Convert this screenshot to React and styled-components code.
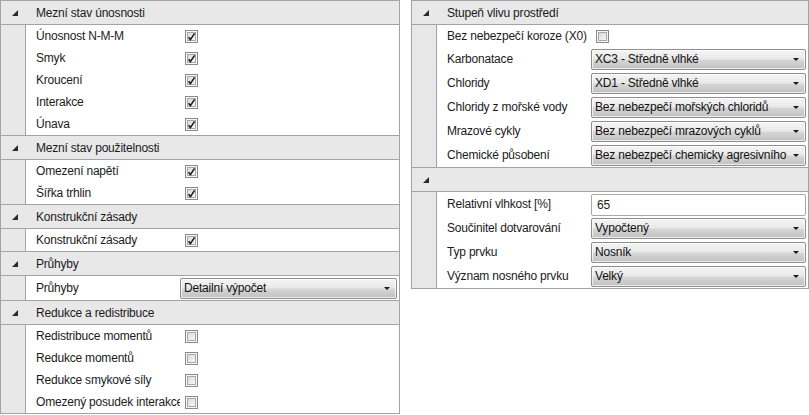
import React from "react";
import styled, { createGlobalStyle } from "styled-components";

const GlobalStyle = createGlobalStyle`
  html, body {
    margin: 0;
    padding: 0;
    background: #fff;
  }
  body {
    font-family: "Liberation Sans", Arial, sans-serif;
    font-size: 12px;
    letter-spacing: -0.2px;
    color: #1b1b1b;
  }
`;

const Page = styled.div`
  display: grid;
  grid-template-columns: 400px 398px;
  column-gap: 11px;
  align-items: start;
  height: 415px;
  overflow: hidden;
`;

const Panel = styled.div`
  border: 1px solid #a3a3a3;
  background: #fff;
`;

const Section = styled.div`
  & + & > div:first-child {
    border-top: 1px solid #a3a3a3;
  }
`;

const Header = styled.div`
  display: flex;
  align-items: center;
  height: 23px;
  background: #e8e8e8;
  border-bottom: 1px solid #a3a3a3;
`;

const Toggle = styled.div`
  width: 35px;
  display: flex;
  padding-left: 11px;
  box-sizing: border-box;
`;

const HeaderTitle = styled.span`
  line-height: 23px;
  padding-top: 1px;
  white-space: nowrap;
`;

const Body = styled.div`
  display: flex;
`;

const Gutter = styled.div`
  width: 24px;
  flex: none;
  background: #e8e8e8;
  border-right: 1px solid #a3a3a3;
`;

const Rows = styled.div`
  flex: 1;
  min-width: 0;
`;

const Row = styled.div`
  display: grid;
  grid-template-columns: 154px 1fr;
  align-items: center;
  height: ${(p) => (p.$tall ? 24 : 22)}px;
`;

const Label = styled.div`
  padding: 1px 0 0 10px;
  white-space: nowrap;
  overflow: hidden;
  line-height: 21px;
`;

const Value = styled.div`
  display: flex;
  align-items: center;
  padding-right: 2px;
  min-width: 0;
`;

const CheckWrap = styled.span`
  display: inline-flex;
  margin-left: 5px;
`;

const Combo = styled.div`
  flex: 1;
  min-width: 0;
  display: flex;
  align-items: center;
  height: 21px;
  margin-top: 1px;
  box-sizing: border-box;
  border: 1px solid #8e8e8e;
  border-radius: 2px;
  box-shadow: inset 0 0 0 1px rgba(255, 255, 255, 0.7);
  background: linear-gradient(
    #f4f4f4 0%,
    #e9e9e9 48%,
    #d6d6d6 52%,
    #c1c1c1 100%
  );
  padding: 0 6px 0 3px;
`;

const ComboText = styled.span`
  flex: 1;
  min-width: 0;
  overflow: hidden;
  white-space: nowrap;
  line-height: 19px;
  color: #111;
`;

const Arrow = styled.span`
  flex: none;
  width: 0;
  height: 0;
  margin-left: 6px;
  border-left: 3px solid transparent;
  border-right: 3px solid transparent;
  border-top: 3px solid #1a1a1a;
`;

const TextBox = styled.div`
  flex: 1;
  height: 22px;
  margin-top: 1px;
  box-sizing: border-box;
  border: 1px solid #a8a8a8;
  border-radius: 2px;
  background: #fff;
  padding-left: 5px;
  line-height: 20px;
`;

function ExpandGlyph() {
  return (
    <svg width="6" height="6" viewBox="0 0 6 6">
      <polygon points="6,0 6,6 0,6" fill="#2a2a2a" />
    </svg>
  );
}

function CheckBox({ checked }) {
  return (
    <CheckWrap>
      <svg width="13" height="13" viewBox="0 0 13 13">
        <defs>
          <linearGradient id="cbg" x1="0" y1="0" x2="1" y2="1">
            <stop offset="0" stopColor="#d8d8d8" />
            <stop offset="1" stopColor="#fafafa" />
          </linearGradient>
        </defs>
        <rect x="0.5" y="0.5" width="12" height="12" fill="#f6f6f6" stroke="#8a8a8a" />
        <rect x="2.5" y="2.5" width="8" height="8" fill="url(#cbg)" stroke="#a9a9a9" />
        {checked && (
          <path
            d="M3.6 7.2 L5.4 9.6 L9.6 3.4"
            fill="none"
            stroke="#1c1c1c"
            strokeWidth="1.6"
          />
        )}
      </svg>
    </CheckWrap>
  );
}

function Field({ item }) {
  if (item.type === "check") {
    return <CheckBox checked={item.checked} />;
  }
  if (item.type === "combo") {
    return (
      <Combo>
        <ComboText>{item.value}</ComboText>
        <Arrow />
      </Combo>
    );
  }
  return <TextBox>{item.value}</TextBox>;
}

function PropertySection({ title, items }) {
  return (
    <Section>
      <Header>
        <Toggle>
          <ExpandGlyph />
        </Toggle>
        <HeaderTitle>{title}</HeaderTitle>
      </Header>
      <Body>
        <Gutter />
        <Rows>
          {items.map((item) => (
            <Row key={item.label} $tall={item.type !== "check"}>
              <Label>{item.label}</Label>
              <Value>
                <Field item={item} />
              </Value>
            </Row>
          ))}
        </Rows>
      </Body>
    </Section>
  );
}

const leftSections = [
  {
    title: "Mezní stav únosnosti",
    items: [
      { label: "Únosnost N-M-M", type: "check", checked: true },
      { label: "Smyk", type: "check", checked: true },
      { label: "Kroucení", type: "check", checked: true },
      { label: "Interakce", type: "check", checked: true },
      { label: "Únava", type: "check", checked: true },
    ],
  },
  {
    title: "Mezní stav použitelnosti",
    items: [
      { label: "Omezení napětí", type: "check", checked: true },
      { label: "Šířka trhlin", type: "check", checked: true },
    ],
  },
  {
    title: "Konstrukční zásady",
    items: [{ label: "Konstrukční zásady", type: "check", checked: true }],
  },
  {
    title: "Průhyby",
    items: [{ label: "Průhyby", type: "combo", value: "Detailní výpočet" }],
  },
  {
    title: "Redukce a redistribuce",
    items: [
      { label: "Redistribuce momentů", type: "check", checked: false },
      { label: "Redukce momentů", type: "check", checked: false },
      { label: "Redukce smykové síly", type: "check", checked: false },
      { label: "Omezený posudek interakce", type: "check", checked: false },
    ],
  },
];

const rightSections = [
  {
    title: "Stupeň vlivu prostředí",
    items: [
      { label: "Bez nebezpečí koroze (X0)", type: "check", checked: false },
      { label: "Karbonatace", type: "combo", value: "XC3 - Středně vlhké" },
      { label: "Chloridy", type: "combo", value: "XD1 - Středně vlhké" },
      {
        label: "Chloridy z mořské vody",
        type: "combo",
        value: "Bez nebezpečí mořských chloridů",
      },
      {
        label: "Mrazové cykly",
        type: "combo",
        value: "Bez nebezpečí mrazových cyklů",
      },
      {
        label: "Chemické působení",
        type: "combo",
        value: "Bez nebezpečí chemicky agresivního prostředí",
      },
    ],
  },
  {
    title: "",
    items: [
      { label: "Relativní vlhkost [%]", type: "text", value: "65" },
      { label: "Součinitel dotvarování", type: "combo", value: "Vypočtený" },
      { label: "Typ prvku", type: "combo", value: "Nosník" },
      { label: "Význam nosného prvku", type: "combo", value: "Velký" },
    ],
  },
];

export default function App() {
  return (
    <>
      <GlobalStyle />
      <Page>
        <Panel>
          {leftSections.map((s) => (
            <PropertySection key={s.title} title={s.title} items={s.items} />
          ))}
        </Panel>
        <Panel>
          {rightSections.map((s) => (
            <PropertySection key={s.title || "misc"} title={s.title} items={s.items} />
          ))}
        </Panel>
      </Page>
    </>
  );
}
